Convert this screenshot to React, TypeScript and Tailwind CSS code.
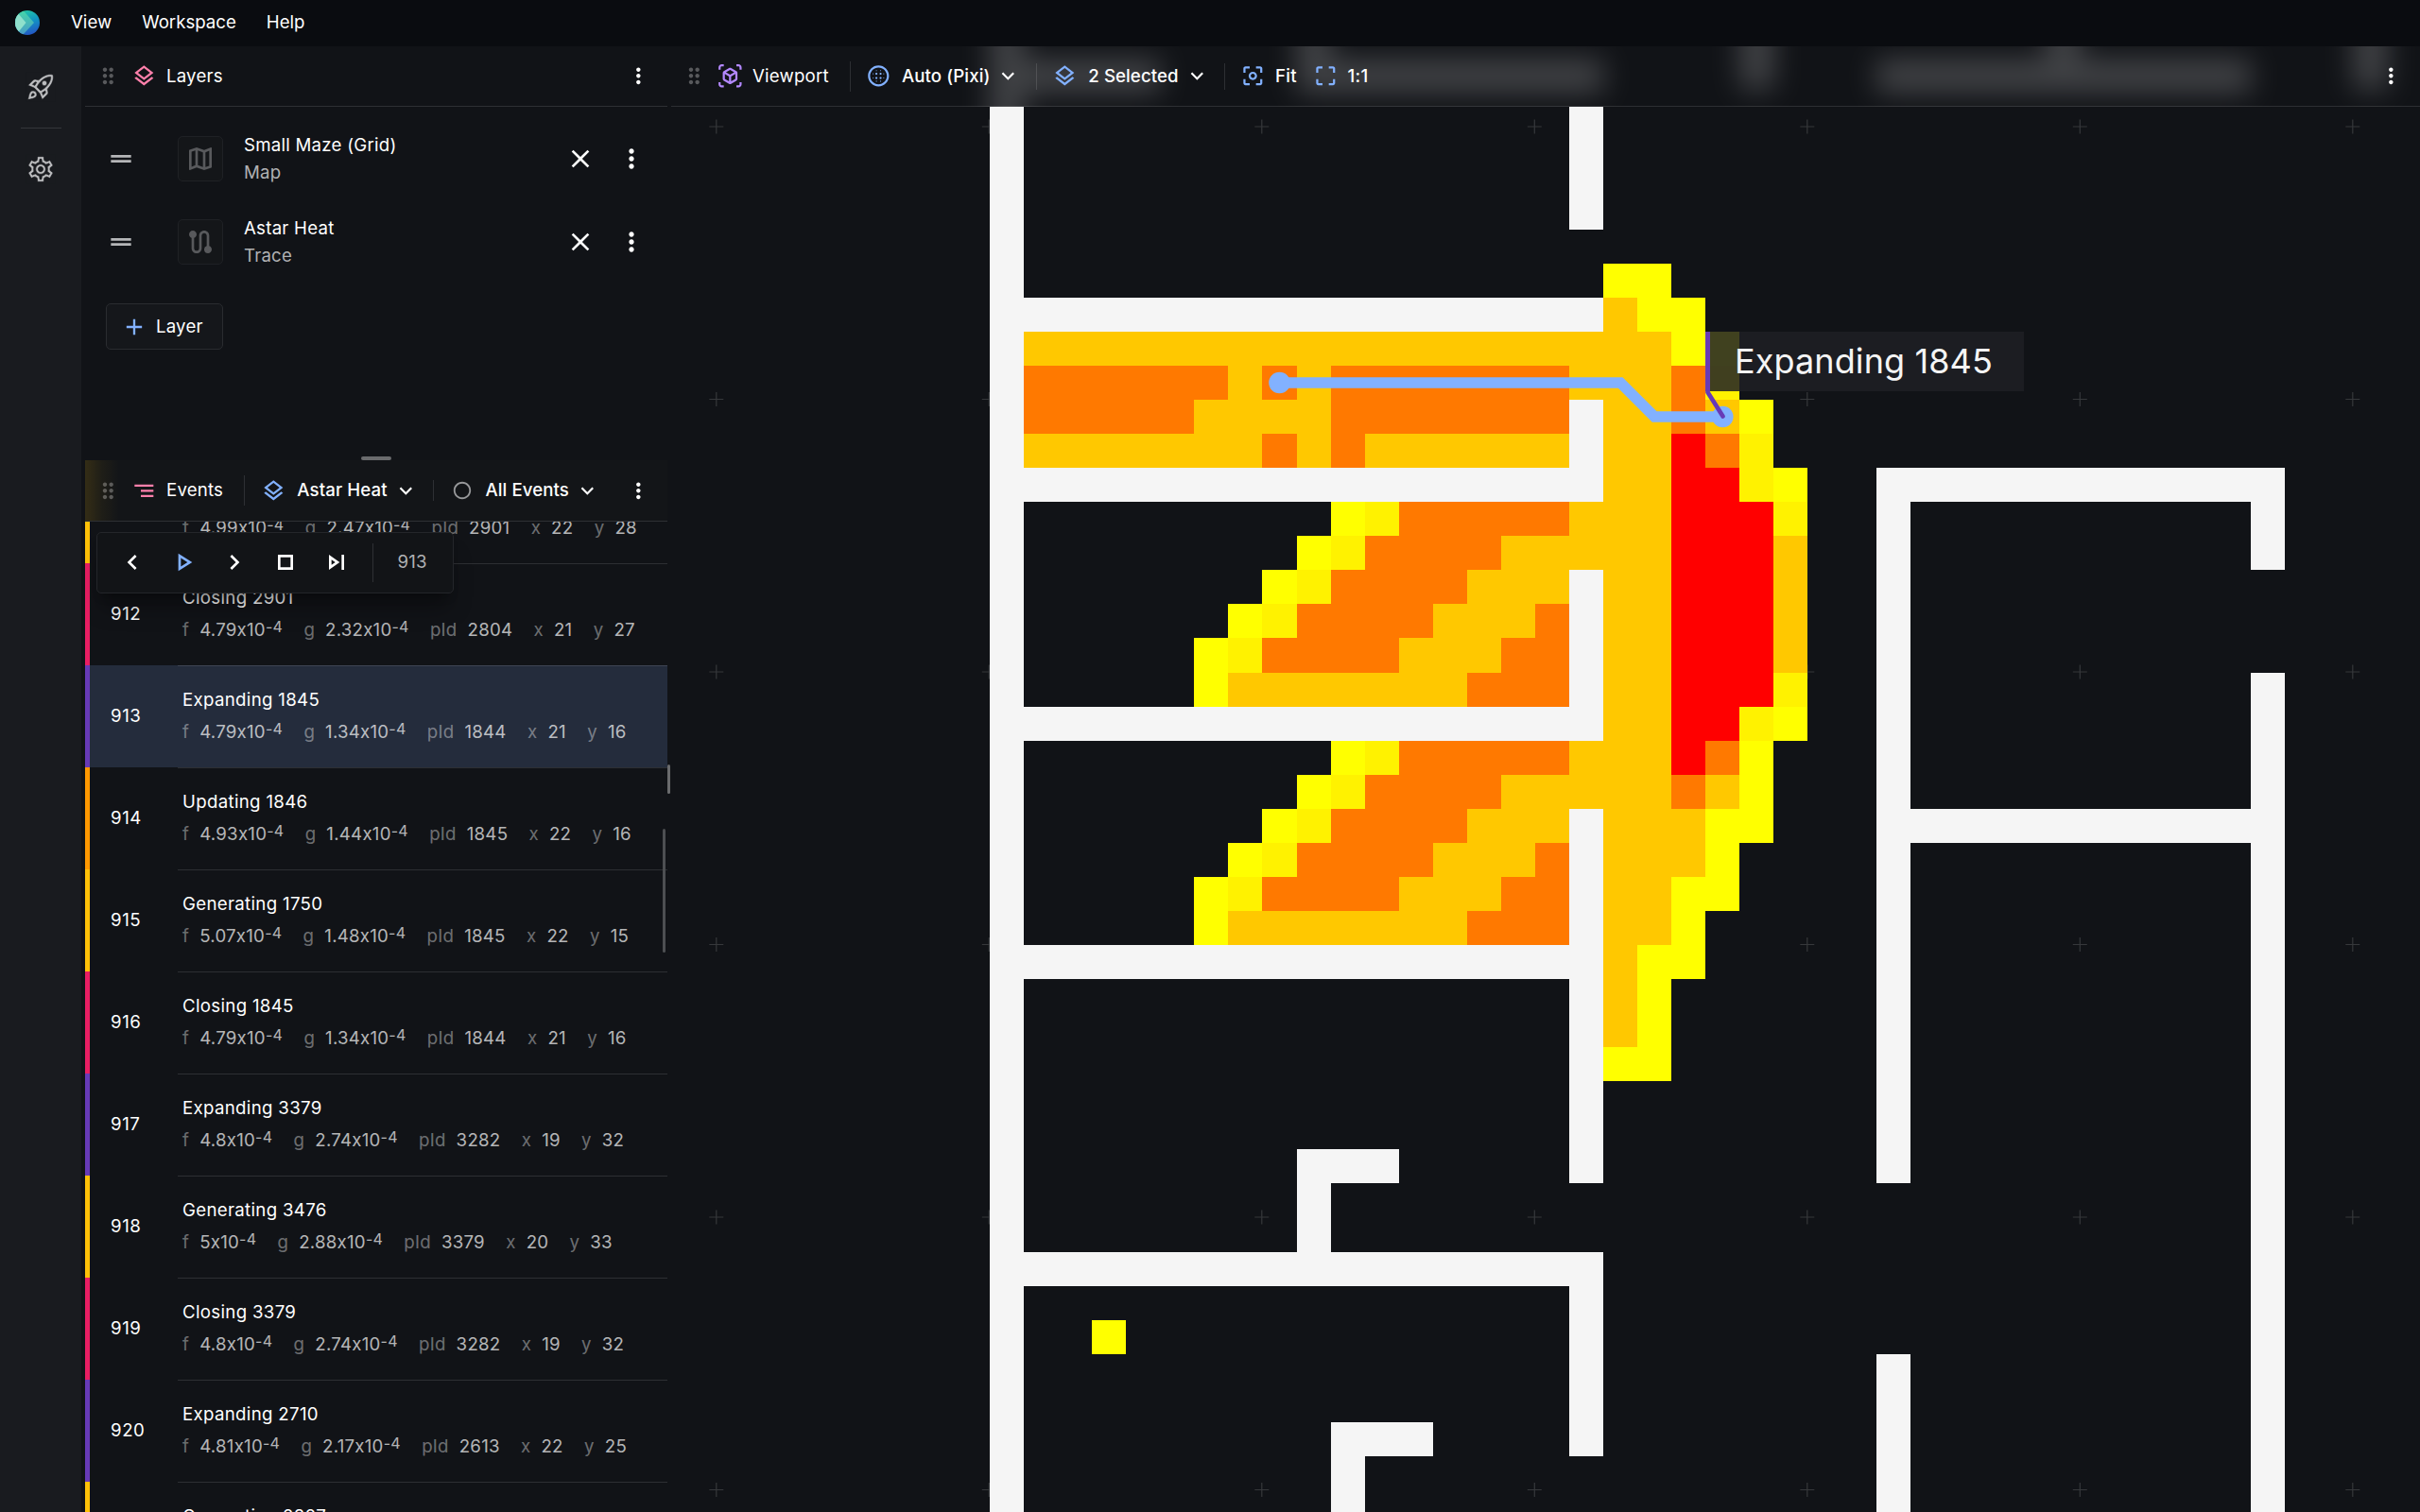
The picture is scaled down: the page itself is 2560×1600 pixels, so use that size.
import React from "react";
import type { ReactNode } from "react";
import type { IconType } from "react-icons";
import {
  MdAdd,
  MdChevronLeft,
  MdChevronRight,
  MdClose,
  MdCropFree,
  MdDragHandle,
  MdDragIndicator,
  MdExpandMore,
  MdMoreVert,
  MdOutlineBlurCircular,
  MdOutlineCenterFocusWeak,
  MdOutlineCircle,
  MdOutlineLayers,
  MdOutlineMap,
  MdOutlinePlayArrow,
  MdOutlineRocketLaunch,
  MdOutlineSettings,
  MdOutlineSkipNext,
  MdOutlineStop,
  MdOutlineViewInAr,
  MdRoute,
  MdSegment,
} from "react-icons/md";

const VIOLET = "bg-[#673ab7]";
const AMBER = "bg-[#ffc107]";
const PINK = "bg-[#e91e63]";
const ORANGE = "bg-[#ff9800]";

type Step = {
  id: number;
  title: string;
  stripe: string;
  f: string;
  g: string;
  pid: string;
  x: string;
  y: string;
};

const firstStep = { stripe: AMBER, f: "4.99", g: "2.47", pid: "2901", x: "22", y: "28" };

const steps: Step[] = [
  { id: 912, title: "Closing 2901", stripe: PINK, f: "4.79", g: "2.32", pid: "2804", x: "21", y: "27" },
  { id: 913, title: "Expanding 1845", stripe: VIOLET, f: "4.79", g: "1.34", pid: "1844", x: "21", y: "16" },
  { id: 914, title: "Updating 1846", stripe: ORANGE, f: "4.93", g: "1.44", pid: "1845", x: "22", y: "16" },
  { id: 915, title: "Generating 1750", stripe: AMBER, f: "5.07", g: "1.48", pid: "1845", x: "22", y: "15" },
  { id: 916, title: "Closing 1845", stripe: PINK, f: "4.79", g: "1.34", pid: "1844", x: "21", y: "16" },
  { id: 917, title: "Expanding 3379", stripe: VIOLET, f: "4.8", g: "2.74", pid: "3282", x: "19", y: "32" },
  { id: 918, title: "Generating 3476", stripe: AMBER, f: "5", g: "2.88", pid: "3379", x: "20", y: "33" },
  { id: 919, title: "Closing 3379", stripe: PINK, f: "4.8", g: "2.74", pid: "3282", x: "19", y: "32" },
  { id: 920, title: "Expanding 2710", stripe: VIOLET, f: "4.81", g: "2.17", pid: "2613", x: "22", y: "25" },
];

function MenuBar() {
  return (
    <header className="flex h-[49px] shrink-0 items-center bg-[#0a0c10] pb-px pl-4">
      <svg viewBox="0 0 26 26" className="size-[26px]">
        <defs>
          <clipPath id="logo">
            <circle cx="13" cy="13" r="13" />
          </clipPath>
          <linearGradient id="back" x1="0.3" y1="0" x2="0.6" y2="1">
            <stop offset="0" stopColor="#22c7a4" />
            <stop offset="0.5" stopColor="#1292c4" />
            <stop offset="1" stopColor="#2456c4" />
          </linearGradient>
          <linearGradient id="middle" x1="0" y1="0" x2="0" y2="1">
            <stop offset="0" stopColor="#45d6a8" />
            <stop offset="1" stopColor="#4a9cc8" />
          </linearGradient>
        </defs>
        <g clipPath="url(#logo)">
          <rect width="26" height="26" fill="url(#back)" />
          <path d="M0 0H8.500L20 13L8 26H0Z" fill="url(#middle)" />
          <path d="M0 3H3L11.500 13L3 23.500H0Z" fill="#8fe0cc" />
        </g>
      </svg>
      <nav className="flex gap-8 pb-px pl-[33px]">
        <span>View</span>
        <span>Workspace</span>
        <span>Help</span>
      </nav>
    </header>
  );
}

function SideRail() {
  return (
    <aside className="flex w-[86px] shrink-0 flex-col items-center bg-[#191b1f] pt-[27px] text-[#bcbdbf]">
      <MdOutlineRocketLaunch className="size-8" stroke="#191b1f" strokeWidth="0.4" />
      <div className="mt-[27px] h-px w-[43px] bg-[#34363a]" />
      <MdOutlineSettings className="mt-[27px] size-8" stroke="#191b1f" strokeWidth="0.5" />
    </aside>
  );
}

function Grip() {
  return <MdDragIndicator className="mr-[11.4px] size-[26.67px] shrink-0 text-[#58595c]" />;
}

function Title({ icon: Icon, color, children }: { icon: IconType; color: string; children: ReactNode }) {
  return (
    <div className="flex items-center gap-[10px]">
      <Icon className={`size-[26.67px] shrink-0 ${color}`} />
      <span className="tracking-[0.01em]">{children}</span>
    </div>
  );
}

function Picker({ icon, children }: { icon: ReactNode; children: ReactNode }) {
  return (
    <div className="flex items-center font-medium tracking-[0.005em]">
      <div className="mr-[11.5px] flex size-[26.67px] shrink-0 items-center justify-center">{icon}</div>
      <span>{children}</span>
      <MdExpandMore className="ml-[6px] size-[26.67px] shrink-0" />
    </div>
  );
}

function LayerRow({ icon: Icon, name, kind }: { icon: IconType; name: string; kind: string }) {
  return (
    <div className="flex h-[88px] items-center pr-[22px] pl-[22px]">
      <MdDragHandle className="size-8 text-[#b5b6b8]" />
      <div className="ml-[44px] flex size-12 items-center justify-center rounded-[5px] border border-[#1f2125] bg-[#141619] text-[#58595c]">
        <Icon className="size-8 shrink-0" />
      </div>
      <div className="ml-[22px] flex-1">
        <div className="leading-[29.5px] tracking-[0.013em]">{name}</div>
        <div className="leading-[29.5px] tracking-[0.01em] text-[#b0b1b3]">{kind}</div>
      </div>
      <MdClose className="mr-[22px] size-8" />
      <MdMoreVert className="size-8" />
    </div>
  );
}

function LayersPanel() {
  return (
    <section className="flex h-[438px] shrink-0 flex-col">
      <div className="flex h-16 items-center border-b border-[#2e3034] pr-[17.6px] pl-[11.3px]">
        <Grip />
        <div className="flex-1">
          <Title icon={MdOutlineLayers} color="text-[#ff80ab]">
            Layers
          </Title>
        </div>
        <MdMoreVert className="size-[26.67px]" />
      </div>
      <div className="pt-[11px]">
        <LayerRow icon={MdOutlineMap} name="Small Maze (Grid)" kind="Map" />
        <LayerRow icon={MdRoute} name="Astar Heat" kind="Trace" />
      </div>
      <button className="mt-[21px] ml-[22px] flex h-[49px] w-[124px] items-center rounded-[5px] border border-[#2a2c30] bg-[#15171b] pl-[14.500px]">
        <MdAdd className="mr-[9.5px] size-7 text-[#82b1ff]" />
        <span className="tracking-[0.01em]">Layer</span>
      </button>
      <div className="flex flex-1 items-end justify-center">
        <div className="h-1 w-8 rounded-full bg-[#6a6b6d]" />
      </div>
    </section>
  );
}

function Power({ base }: { base: string }) {
  return (
    <span>
      {base}x10<sup className="top-[-4px] text-[16px]">-4</sup>
    </span>
  );
}

function Property({ name, children }: { name: string; children: ReactNode }) {
  return (
    <div className="flex gap-[11px]">
      <span className="text-white/40">{name}</span>
      <span className="text-white/70">{children}</span>
    </div>
  );
}

function Properties({ step }: { step: Omit<Step, "id" | "title"> }) {
  return (
    <div className="flex gap-[22.3px] leading-[35px] tracking-[0.013em]">
      <Property name="f">
        <Power base={step.f} />
      </Property>
      <Property name="g">
        <Power base={step.g} />
      </Property>
      <Property name="pId">{step.pid}</Property>
      <Property name="x">{step.x}</Property>
      <Property name="y">{step.y}</Property>
    </div>
  );
}

function StepRow({ step, selected }: { step: Step; selected: boolean }) {
  return (
    <div className={`flex h-[108px] shrink-0 ${selected ? "bg-[#242c3c]" : ""}`}>
      <div className={`w-[5px] ${step.stripe}`} />
      <div className="flex w-[93px] items-center pl-[22px] tracking-[0.03em]">{step.id}</div>
      <div className="flex flex-1 flex-col border-t border-white/12 pt-[19px] pl-[5px]">
        <div className="leading-[33px] tracking-[0.017em]">{step.title}</div>
        <Properties step={step} />
      </div>
    </div>
  );
}

function Playback() {
  return (
    <div className="absolute top-[11px] left-[12px] flex h-[65px] w-[378px] items-center rounded-[5px] border border-[#24262a] bg-[#121417] pb-px pl-[21px] shadow-xl shadow-black/30">
      <div className="flex gap-[22px]">
        <MdChevronLeft className="size-8" />
        <MdOutlinePlayArrow className="size-8 text-[#82b1ff]" />
        <MdChevronRight className="size-8" />
        <MdOutlineStop className="size-8" />
        <MdOutlineSkipNext className="size-8" />
      </div>
      <div className="ml-[22px] h-[41px] w-px bg-[#2e3034]" />
      <span className="ml-[25.5px] tracking-[0.01em] text-[#b0b1b3]">913</span>
    </div>
  );
}

function EventsPanel() {
  return (
    <section className="flex min-h-0 flex-1 flex-col">
      <div className="relative flex h-[65px] shrink-0 items-center border-b border-[#2e3034] bg-[#131518] pr-[17.6px] pl-[11.3px]">
        <div className="absolute inset-y-0 left-0 w-9 bg-linear-to-r from-[#ffc107]/14 via-[#ffc107]/5 to-transparent" />
        <Grip />
        <Title icon={MdSegment} color="text-[#ff80ab]">
          Events
        </Title>
        <div className="mr-[17px] ml-[22px] h-8 w-px bg-[#2e3034]" />
        <Picker icon={<MdOutlineLayers className="size-[26.67px] text-[#82b1ff]" />}>Astar Heat</Picker>
        <div className="mx-4 h-[22px] w-px bg-[#2e3034]" />
        <Picker icon={<MdOutlineCircle className="size-[22px] text-[#97989a]" />}>All Events</Picker>
        <div className="flex-1" />
        <MdMoreVert className="size-[26.67px]" />
      </div>
      <div className="relative min-h-0 flex-1 overflow-hidden">
        <div className="flex h-11 overflow-hidden">
          <div className={`w-[5px] ${firstStep.stripe}`} />
          <div className="-mt-[11px] pl-[98px]">
            <Properties step={firstStep} />
          </div>
        </div>
        <div className="flex flex-col">
          {steps.map((step) => (
            <StepRow key={step.id} step={step} selected={step.id === 913} />
          ))}
        </div>
        <div className="flex">
          <div className={`h-8 w-[5px] ${AMBER}`} />
          <div className="ml-[93px] flex-1 border-t border-white/12 pt-[19px] pl-[5px] leading-[33px] tracking-[0.017em]">
            Generating 2807
          </div>
        </div>
        <Playback />
        <div className="absolute top-[325px] right-[2px] h-[131px] w-[3px] rounded-full bg-[#4d4f52]" />
      </div>
    </section>
  );
}

/* Board geometry: both axes share one cell size, in viewport pixels. */
const CELL = 36.06;
const LEFT = 337;
const TOP = 229.8;
const px = (column: number) => LEFT + column * CELL;
const py = (row: number) => TOP + row * CELL;

const heatFill: Record<string, string> = {
  Y: "#ffff00",
  y: "#fff200",
  A: "#ffc800",
  O: "#ff7900",
  R: "#ff0000",
};

/* One string per row, one character per cell, starting at column 1. */
const heat = [
  ".................YY....",
  ".................AYY...",
  "AAAAAAAAAAAAAAAAAAAYY..",
  "OOOOOOAOAOOOOOOOAAAOy..",
  "OOOOOAAAAOOOOOOO.AAOAY.",
  "AAAAAAAOAOAAAAAA.AAROy.",
  ".................AARRyY",
  ".........YyOOOOOAAARRRy",
  "........YyOOOOAAAAARRRA",
  ".......YyOOOOAAA.AARRRA",
  "......YyOOOOAAAO.AARRRA",
  ".....YyOOOOAAAOO.AARRRA",
  ".....YAAAAAAAOOO.AARRRy",
  ".................AARRyY",
  ".........YyOOOOOAAAROY.",
  "........YyOOOOAAAAAOAY.",
  ".......YyOOOOAAA.AAAYY.",
  "......YyOOOOAAAO.AAAY..",
  ".....YyOOOOAAAOO.AAYY..",
  ".....YAAAAAAAOOO.AAY...",
  ".................AYY...",
  ".................AY....",
  ".................AY....",
  ".................YY....",
];

type Block = [column: number, row: number, columns: number, rows: number];

const walls: Block[] = [
  [0, -8, 1, 46],
  [17, -6, 1, 5],
  [0, 1, 18, 1],
  [0, 6, 18, 1],
  [17, 4, 1, 3],
  [17, 9, 1, 5],
  [0, 13, 18, 1],
  [17, 16, 1, 11],
  [0, 20, 18, 1],
  [9, 26, 3, 1],
  [9, 26, 1, 4],
  [0, 29, 18, 1],
  [17, 29, 1, 6],
  [10, 34, 3, 1],
  [10, 34, 1, 4],
  [26, 6, 12, 1],
  [26, 6, 1, 21],
  [37, 6, 1, 3],
  [37, 12, 1, 26],
  [26, 16, 12, 1],
  [26, 32, 1, 6],
];

/* Walls that lie beneath the toolbar and show through it as a soft glow. */
const hiddenWalls: Block[] = [
  [0, -9, 1, 8],
  [1, -6, 4, 1],
  [9, -9, 1, 3],
  [9, -6, 9, 1],
  [22, -9, 1, 3.9],
  [31, -9, 1, 3],
  [26, -6, 11, 1],
  [40, -9, 1, 3.9],
];

const marks = Array.from({ length: 42 }, (_, i) => ({
  x: 47.8 + (i % 7) * 288.5,
  y: 85 + Math.floor(i / 7) * 288.5,
}));

function Blocks({ items }: { items: Block[] }) {
  return (
    <>
      {items.map(([c, r, w, h], i) => (
        <rect key={i} x={px(c)} y={py(r)} width={w * CELL} height={h * CELL} fill="#f5f5f5" />
      ))}
    </>
  );
}

function Board() {
  return (
    <svg viewBox="0 0 1850 1551" className="block h-[1551px] w-[1850px]">
      <g stroke="#36383b" strokeWidth="1.2">
        {marks.map((m, i) => (
          <path key={i} d={`M${m.x - 7.5} ${m.y}h15M${m.x} ${m.y - 7.5}v15`} />
        ))}
      </g>
      <g shapeRendering="crispEdges">
        {heat.flatMap((line, row) =>
          [...line].map((c, i) =>
            c === "." ? null : (
              <rect key={`${row}-${i}`} x={px(i + 1)} y={py(row)} width={CELL} height={CELL} fill={heatFill[c]} />
            ),
          ),
        )}
        <rect x={px(3)} y={py(31)} width={CELL} height={CELL} fill="#ffff00" />
        <Blocks items={walls} />
      </g>
      <polyline
        points={`${px(8.5)},${py(3.5)} ${px(18.5)},${py(3.5)} ${px(19.5)},${py(4.5)} ${px(21.5)},${py(4.5)}`}
        fill="none"
        stroke="#82b1ff"
        strokeWidth="11.5"
      />
      <circle cx={px(8.5)} cy={py(3.5)} r="11.3" fill="#82b1ff" />
      <circle cx={px(21.5)} cy={py(4.5)} r="11.3" fill="#82b1ff" />
    </svg>
  );
}

function ToolbarGlow() {
  return (
    <svg viewBox="0 0 1850 64" className="absolute inset-0 h-16 w-[1850px]">
      <defs>
        <filter id="glow" filterUnits="userSpaceOnUse" x="-100" y="-160" width="2050" height="380">
          <feGaussianBlur stdDeviation="15" />
        </filter>
      </defs>
      <g filter="url(#glow)" opacity="0.21">
        <Blocks items={hiddenWalls} />
      </g>
    </svg>
  );
}

function Viewport() {
  return (
    <main className="relative flex-1 overflow-hidden">
      <Board />
      <div className="absolute top-[302px] left-[1094px] flex h-[63px] w-[337px] items-center border-l-[5px] border-[#673ab7] bg-[#1f2024]/85 pb-px pl-[26px] text-[36px] tracking-[0.003em] text-[#f5f5f5]">
        Expanding 1845
      </div>
      <svg viewBox="0 0 30 34" className="absolute top-[363px] left-[1092px] h-[34px] w-[30px]">
        <path d="M4.500 0V3L20.500 28.500" fill="none" stroke="#673ab7" strokeWidth="4.6" strokeLinecap="round" />
      </svg>
      <div className="absolute inset-x-0 top-0 h-16 overflow-hidden bg-[#111317]">
        <ToolbarGlow />
        <div className="relative flex h-16 items-center border-b border-white/12 pr-[17.6px] pl-[11.3px]">
          <Grip />
          <Title icon={MdOutlineViewInAr} color="text-[#b388ff]">
            Viewport
          </Title>
          <div className="mr-4 ml-[22px] h-8 w-px bg-white/12" />
          <Picker icon={<MdOutlineBlurCircular className="size-[26.67px] text-[#82b1ff]" />}>Auto (Pixi)</Picker>
          <div className="mx-4 h-7 w-px bg-white/12" />
          <Picker icon={<MdOutlineLayers className="size-[26.67px] text-[#82b1ff]" />}>2 Selected</Picker>
          <div className="mx-4 h-7 w-px bg-white/12" />
          <div className="flex items-center font-medium tracking-[0.015em]">
            <MdOutlineCenterFocusWeak className="mr-[10px] size-[26.67px] text-[#82b1ff]" />
            <span>Fit</span>
            <MdCropFree className="mr-[10px] ml-[17px] size-[26.67px] text-[#82b1ff]" />
            <span>1:1</span>
          </div>
          <div className="flex-1" />
          <MdMoreVert className="size-[26.67px]" />
        </div>
      </div>
    </main>
  );
}

export default function App() {
  return (
    <div className="flex h-[1600px] w-[2560px] flex-col overflow-hidden bg-[#111317] font-['Inter',sans-serif] text-[18.67px] text-white [font-feature-settings:'calt'_0]">
      <MenuBar />
      <div className="flex min-h-0 flex-1">
        <SideRail />
        <div className="ml-1 flex w-[616px] shrink-0 flex-col">
          <LayersPanel />
          <EventsPanel />
        </div>
        <div className="flex w-1 shrink-0 flex-col">
          <div className="mt-[760px] h-[31px] w-[3px] rounded-full bg-[#6a6b6d]" />
        </div>
        <Viewport />
      </div>
    </div>
  );
}
